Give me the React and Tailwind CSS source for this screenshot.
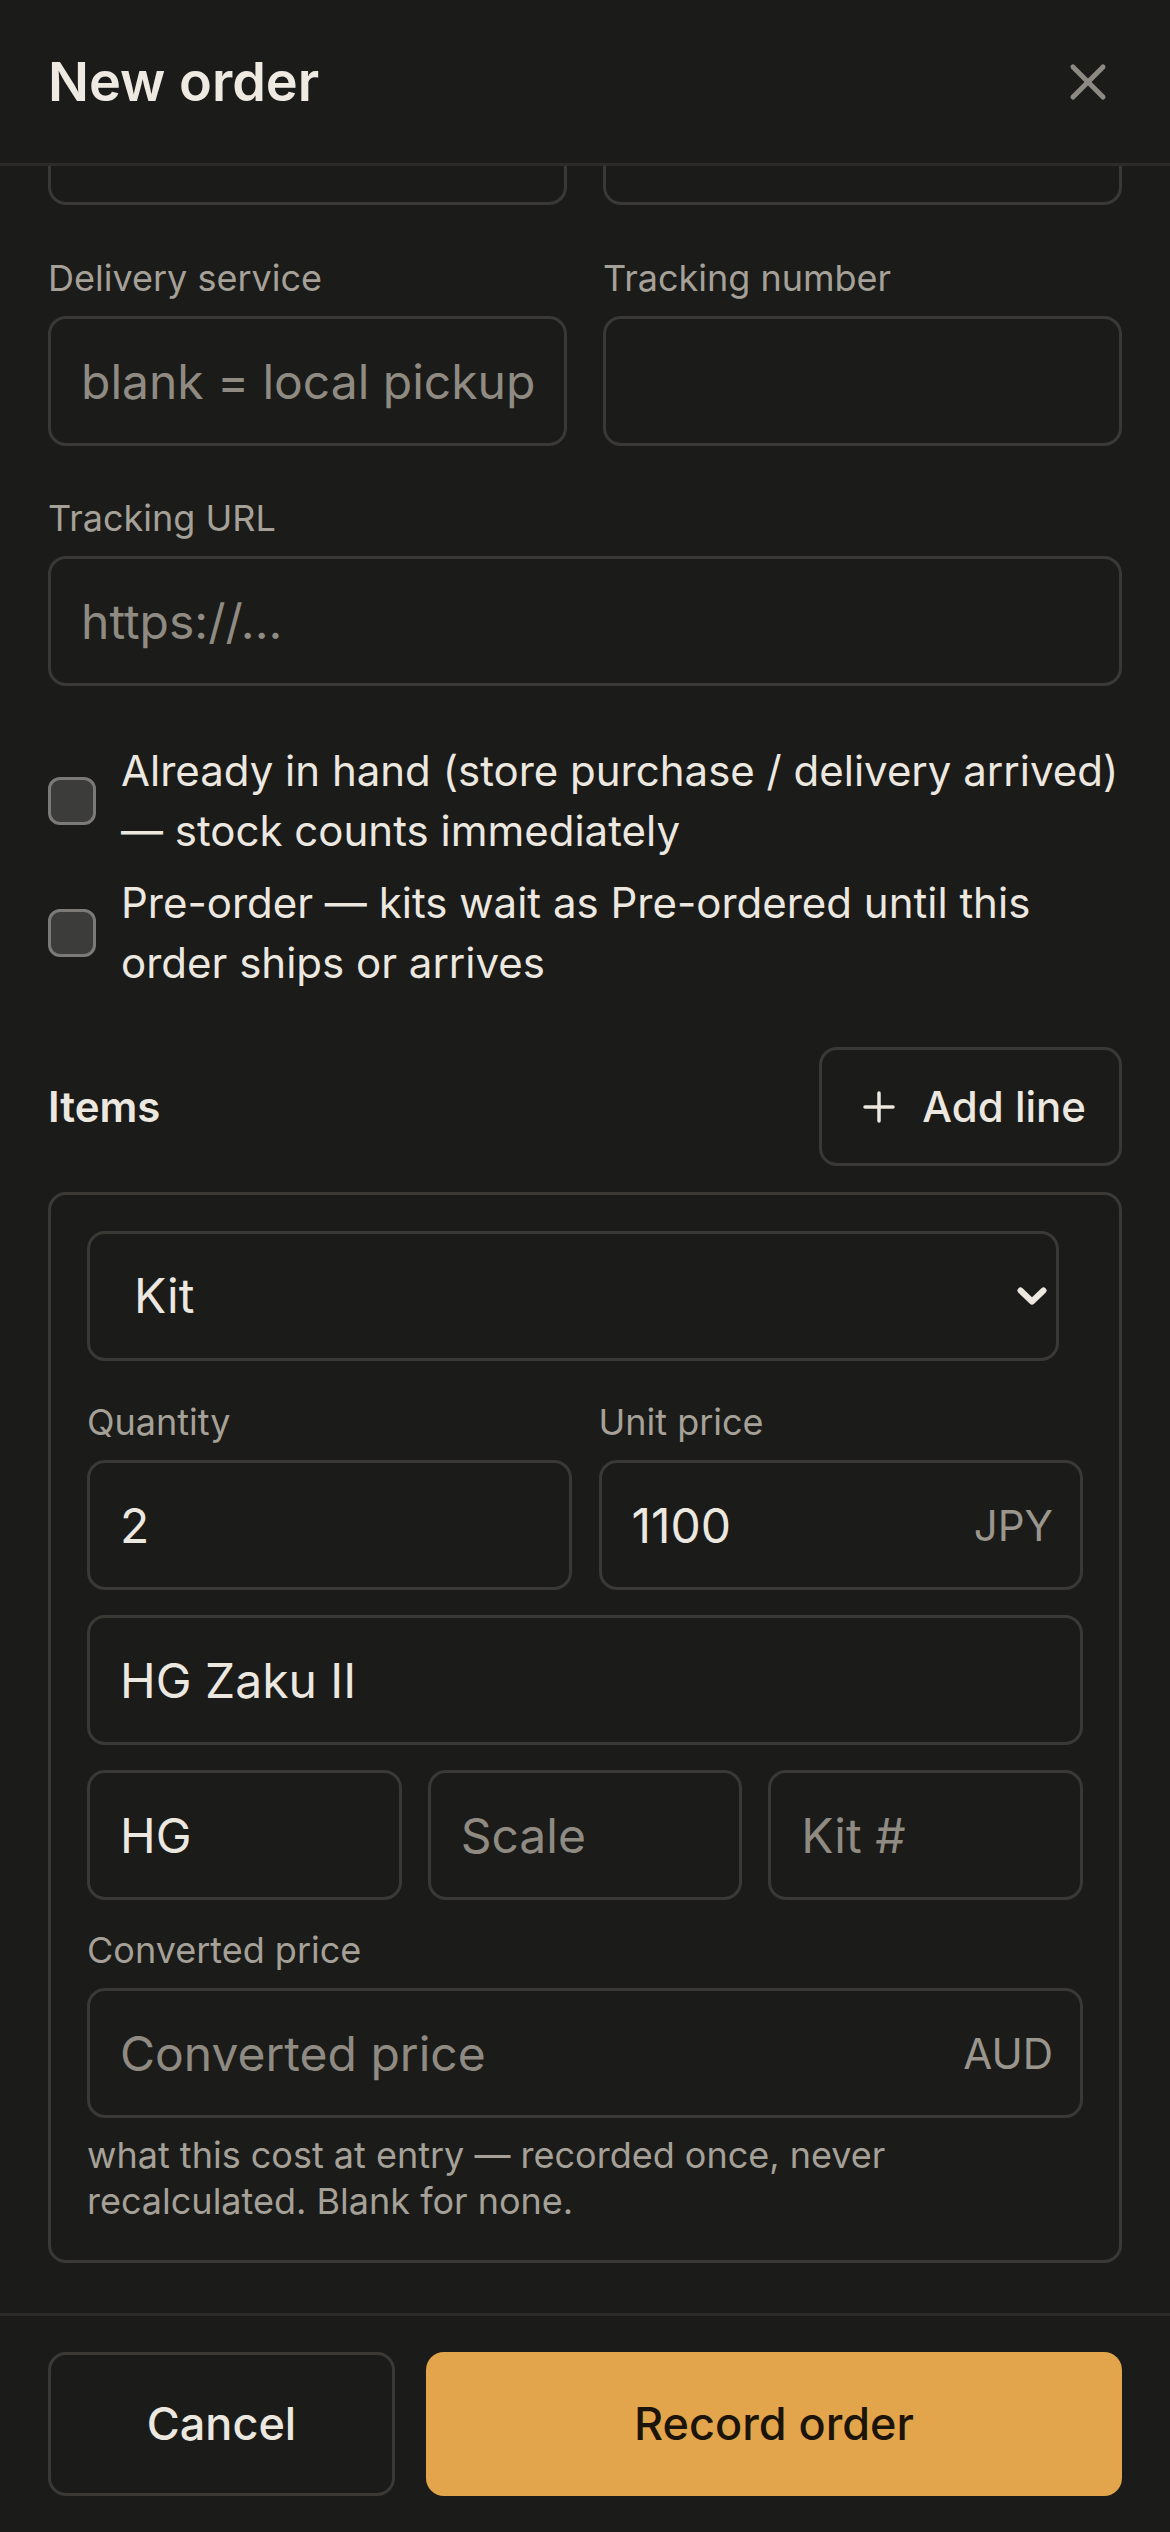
import React from "react";
import { X, Plus } from "lucide-react";

const BORDER = "border-[3px] border-[#3a3936]";
const INPUT =
  "w-full h-[130px] rounded-[18px] bg-[#1b1b19] px-[30px] text-[48px] text-[#ece8e0] placeholder:text-[#8f8b83] outline-none border-[3px] border-[#3a3936]";

function Label({ children }) {
  return (
    <div className="text-[36px] leading-[50px] text-[#a5a198] mb-[13px]">
      {children}
    </div>
  );
}

function Field({ label, placeholder, value }) {
  return (
    <div>
      {label && <Label>{label}</Label>}
      <input
        className={INPUT}
        placeholder={placeholder}
        defaultValue={value}
        readOnly
      />
    </div>
  );
}

function Suffixed({ placeholder, value, suffix }) {
  return (
    <div className="relative">
      <input
        className={INPUT + " pr-[130px]"}
        placeholder={placeholder}
        defaultValue={value}
        readOnly
      />
      <span className="absolute right-[30px] top-1/2 -translate-y-1/2 text-[42px] text-[#9a968d]">
        {suffix}
      </span>
    </div>
  );
}

function Check({ children }) {
  return (
    <label className="flex items-center gap-[25px]">
      <span className="shrink-0 w-[48px] h-[48px] rounded-[12px] bg-[#3c3c3b] border-[3px] border-[#7b7a77]" />
      <span className="text-[42px] leading-[60px] text-[#ece8e0]">{children}</span>
    </label>
  );
}

export default function App() {
  return (
    <div className="h-[2532px] bg-[#1b1b19] flex flex-col font-[Inter,sans-serif] text-[#ece8e0]">
      {/* Header */}
      <header className="h-[166px] shrink-0 px-12 flex items-center justify-between border-b-[3px] border-[#2c2b29]">
        <h1 className="text-[54px] font-semibold text-[#eeeae2]">New order</h1>
        <button className="p-[4px] text-[#8d8a83]">
          <X size={60} strokeWidth={2} />
        </button>
      </header>

      {/* Scrolled body */}
      <main className="flex-1 overflow-hidden px-12">
        <div className="grid grid-cols-2 gap-[36px]">
          <div className={"h-[39px] rounded-b-[18px] border-t-0 " + BORDER} />
          <div className={"h-[39px] rounded-b-[18px] border-t-0 " + BORDER} />
        </div>

        <div className="grid grid-cols-2 gap-[36px] mt-12">
          <Field label="Delivery service" placeholder="blank = local pickup" />
          <Field label="Tracking number" />
        </div>

        <div className="mt-[47px]">
          <Field label="Tracking URL" placeholder="https://..." />
        </div>

        <div className="mt-[55px] flex flex-col gap-[12px]">
          <Check>
            Already in hand (store purchase / delivery arrived) — stock counts
            immediately
          </Check>
          <Check>
            Pre-order — kits wait as Pre-ordered until this order ships or
            arrives
          </Check>
        </div>

        <div className="mt-[54px] flex items-center justify-between">
          <h2 className="text-[42px] font-semibold text-[#ece8e0]">Items</h2>
          <button
            className={
              "h-[119px] rounded-[18px] px-[33px] flex items-center gap-[19px] text-[42px] font-medium text-[#ece8e0] " +
              BORDER
            }
          >
            <Plus size={48} strokeWidth={1.75} />
            Add line
          </button>
        </div>

        {/* Line item card */}
        <div className={"mt-[26px] rounded-[18px] p-[36px] " + BORDER}>
          <div className="pr-[24px]">
            <div
              className={
                "h-[130px] rounded-[18px] pl-[44px] pr-[9px] flex items-center justify-between text-[48px] text-[#ece8e0] " +
                BORDER
              }
            >
              <span>Kit</span>
              <svg width="30" height="20" viewBox="0 0 30 20" fill="none">
                <path
                  d="M3.5 4.5 15 15.5 26.5 4.5"
                  stroke="#ece8e0"
                  strokeWidth="6"
                  strokeLinecap="round"
                  strokeLinejoin="round"
                />
              </svg>
            </div>
          </div>

          <div className="mt-[36px] grid grid-cols-2 gap-[27px]">
            <Field label="Quantity" value="2" />
            <div>
              <Label>Unit price</Label>
              <Suffixed value="1100" suffix="JPY" />
            </div>
          </div>

          <div className="mt-[25px]">
            <Field value="HG Zaku II" />
          </div>

          <div className="mt-[25px] grid grid-cols-3 gap-[26px]">
            <Field value="HG" />
            <Field placeholder="Scale" />
            <Field placeholder="Kit #" />
          </div>

          <div className="mt-[25px]">
            <Label>Converted price</Label>
            <Suffixed placeholder="Converted price" suffix="AUD" />
          </div>

          <p className="mt-[14px] text-[36px] leading-[46px] text-[#a5a198]">
            what this cost at entry — recorded once, never recalculated. Blank
            for none.
          </p>
        </div>
      </main>

      {/* Footer */}
      <footer className="shrink-0 border-t-[3px] border-[#2c2b29] px-12 py-[36px] flex gap-[31px]">
        <button
          className={
            "w-[347px] shrink-0 h-[144px] rounded-[18px] text-[45px] font-medium text-[#ece8e0] " +
            BORDER
          }
        >
          Cancel
        </button>
        <button className="flex-1 h-[144px] rounded-[18px] bg-[#e2a54b] text-[45px] font-medium text-[#1c1409]">
          Record order
        </button>
      </footer>
    </div>
  );
}
